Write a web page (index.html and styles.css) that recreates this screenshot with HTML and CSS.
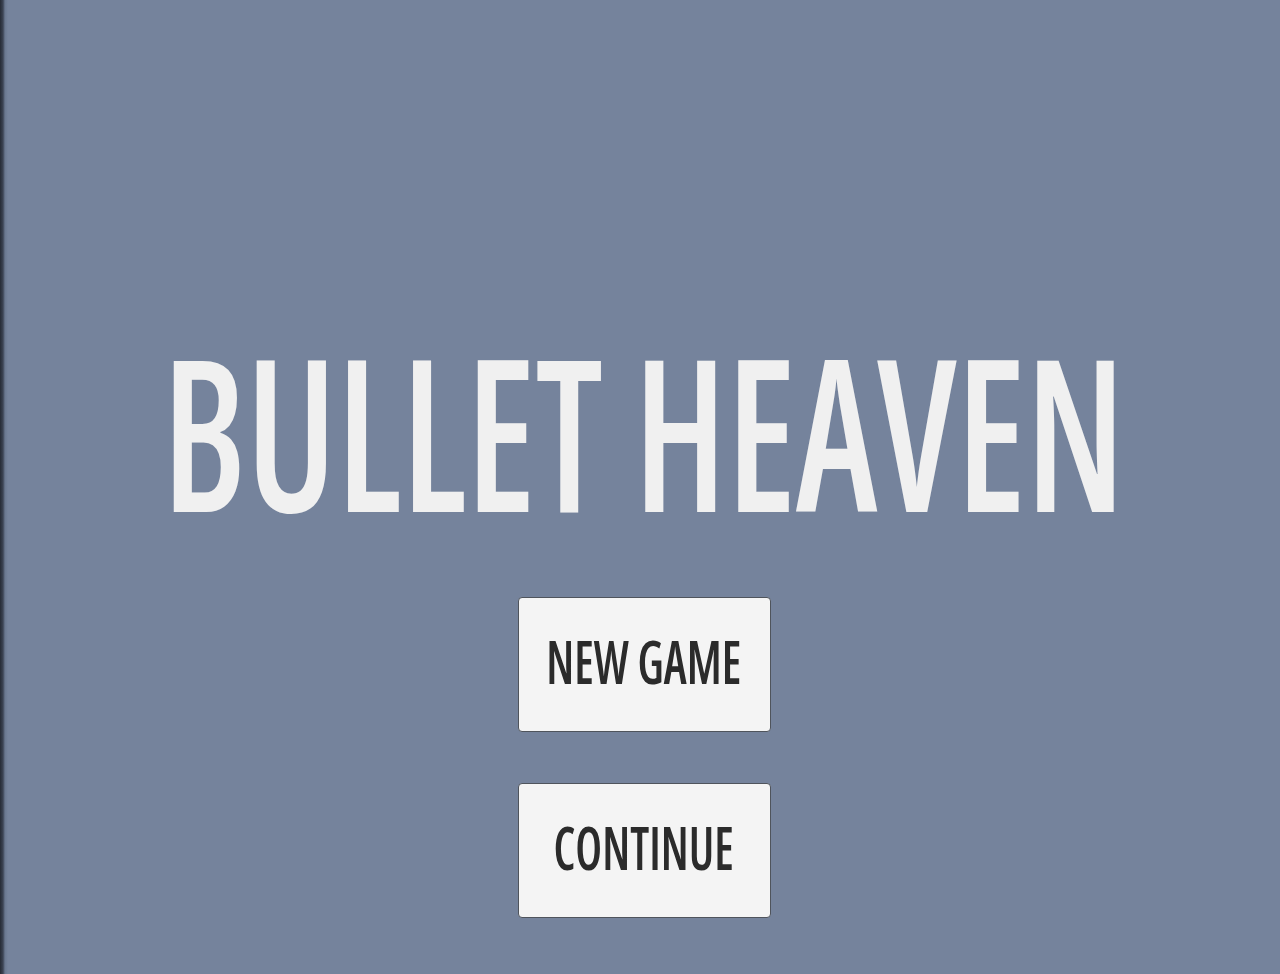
FILE: index.html
```html
<!DOCTYPE html>
<html lang="en">

<head>
  <meta charset="UTF-8">
  <meta name="viewport" content="width=device-width, initial-scale=1.0">
  <title>Bullet Heaven</title>
  <link rel="stylesheet" href="styles.css">
</head>

<body>
  <main class="menu">
    <h1 class="title"><span class="squeeze">BULLET HEAVEN</span></h1>
    <div class="menu-buttons">
      <button class="menu-button"><span class="squeeze">NEW GAME</span></button>
      <button class="menu-button"><span class="squeeze">CONTINUE</span></button>
    </div>
  </main>
</body>

</html>
```

FILE: styles.css
```css
html, body {
  height: 100%;
}

body {
  margin: 0;
  background-color: #75839c;
  background-image: linear-gradient(to right, #262b35 0, #3c4454 3px, #6a7890 5px, #75839c 8px);
  background-repeat: no-repeat;
  font-family: "Open Sans", "DejaVu Sans Condensed", sans-serif;
  font-stretch: 75%;
  overflow: hidden;
}

.menu {
  height: 100%;
  display: flex;
  flex-direction: column;
  align-items: center;
  padding: 325px 0 0 8px;
  box-sizing: border-box;
}

/* the title font only goes down to 75% width, squeeze the rest */
.squeeze {
  display: inline-block;
  transform: scaleX(0.795);
}

.title {
  margin: 0;
  color: #f0f0f0;
  font-size: 211px;
  font-weight: 600;
  line-height: 211px;
  white-space: nowrap;
}

.menu-buttons {
  display: flex;
  flex-direction: column;
  gap: 51px;
  margin-top: 61px;
}

.menu-button {
  width: 253px;
  height: 135px;
  display: flex;
  justify-content: center;
  align-items: center;
  background: #f4f4f4;
  border: 1px solid #4f545c;
  border-radius: 4px;
  color: #2b2b2b;
  font-family: inherit;
  font-stretch: 75%;
  font-size: 59px;
  font-weight: 600;
  white-space: nowrap;
  cursor: pointer;
  padding: 0 0 7px;
}

.menu-button .squeeze {
  transform: scaleX(0.8);
}
```
